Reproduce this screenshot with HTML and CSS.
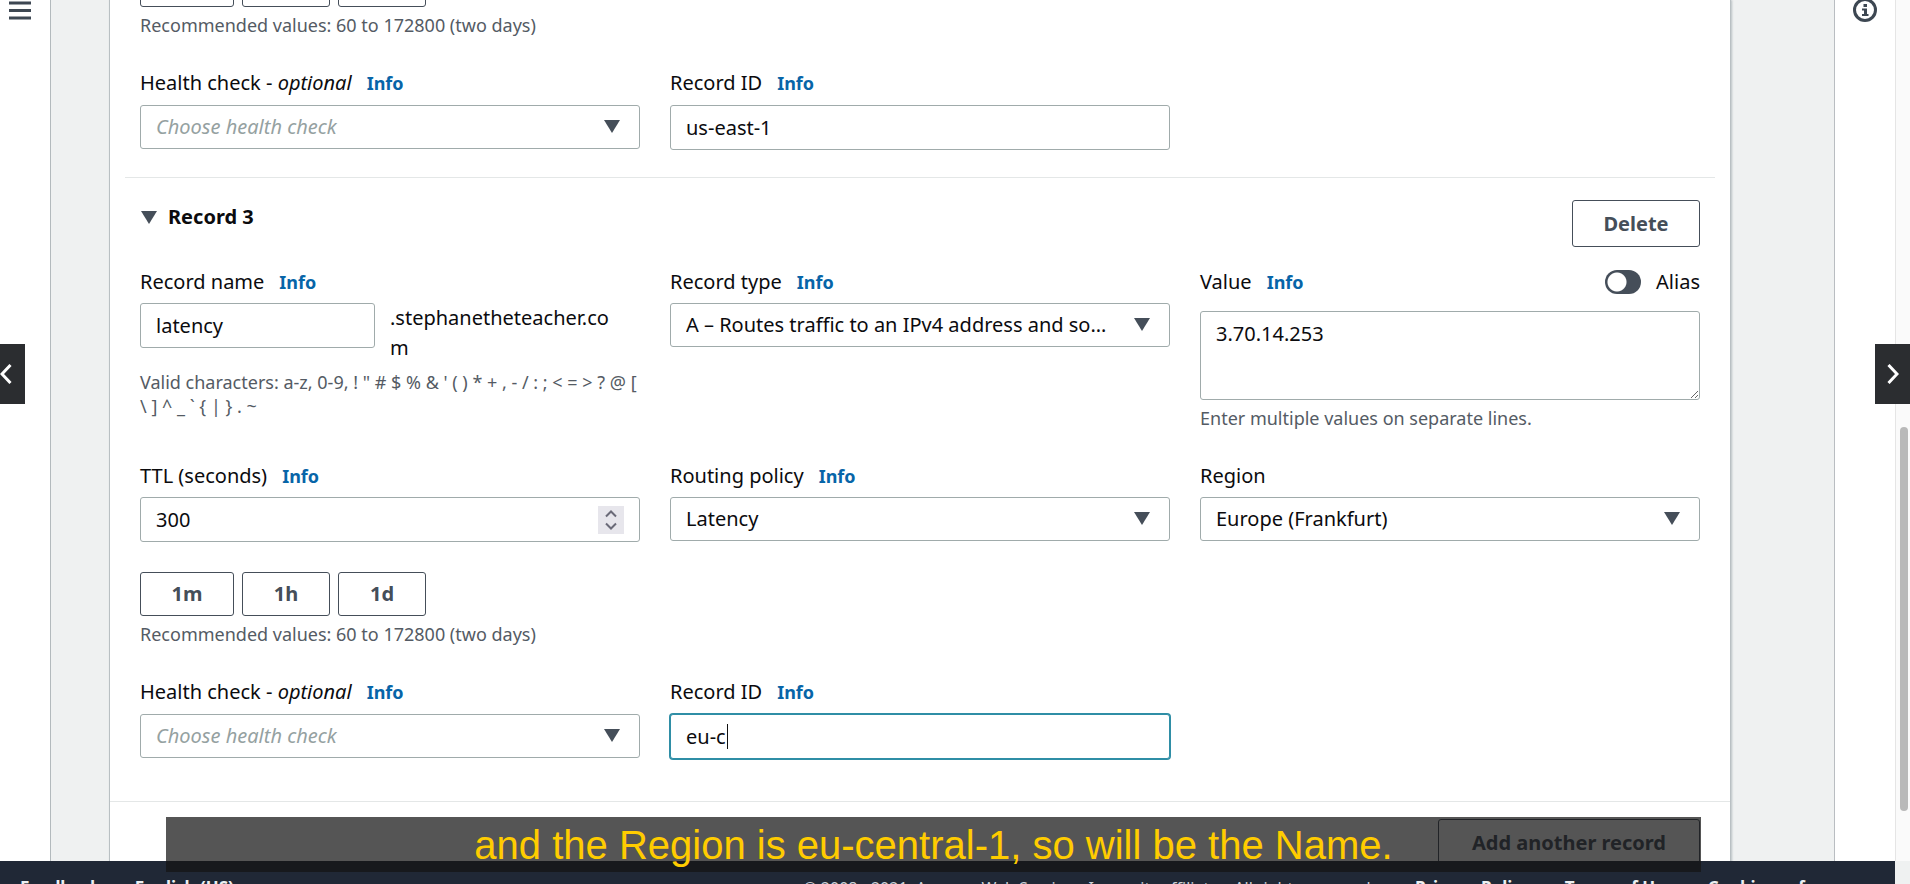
FILE: index.html
```
<!DOCTYPE html>
<html lang="en">
<head>
<meta charset="utf-8">
<title>Create record</title>
<link rel="stylesheet" href="styles.css">
</head>
<body>
<div class="app">
  <div class="workspace">
    <aside class="side side-left">
      <button class="icon-button" type="button" aria-label="Open navigation">
        <svg width="22" height="20" viewBox="0 0 22 20"><path d="M0 3h22M0 10.500h22M0 18h22" stroke="#3d4752" stroke-width="3"/></svg>
      </button>
    </aside>
    <main class="card">
      <section class="record record-previous">
        <div class="presets"><button class="button preset preset-minute" type="button" aria-label="1 minute"></button><button class="button preset" type="button" aria-label="1 hour"></button><button class="button preset" type="button" aria-label="1 day"></button></div>
        <p class="hint">Recommended values: 60 to 172800 (two days)</p>
        <div class="grid identity">
          <div class="field">
            <div class="label-row"><label for="health2">Health check - <em>optional</em></label><a class="info" href="#">Info</a></div>
            <div class="select-wrap"><select id="health2" class="control placeholder"><option>Choose health check</option></select><svg class="caret" viewBox="0 0 16 13"><path d="M0 0h16L8 13z"/></svg></div>
          </div>
          <div class="field">
            <div class="label-row"><label for="id2">Record ID</label><a class="info" href="#">Info</a></div>
            <input id="id2" class="control input" type="text" value="us-east-1">
          </div>
        </div>
      </section>
      <section class="record">
        <div class="record-head">
          <h2><button class="toggle" type="button"><svg class="caret-head" viewBox="0 0 16 13"><path d="M0 0h16L8 13z"/></svg>Record 3</button></h2>
          <button class="button delete" type="button">Delete</button>
        </div>
        <div class="grid row-one">
          <div class="field">
            <div class="label-row"><label for="name3">Record name</label><a class="info" href="#">Info</a></div>
            <div class="name-row"><input id="name3" class="control input" type="text" value="latency"><span class="domain">.stephanetheteacher.com</span></div>
            <p class="hint chars">Valid characters: a-z, 0-9, ! " # $ % &amp; ' ( ) * + , - / : ; &lt; = &gt; ? @ [ \ ] ^ _ ` { | } . ~</p>
          </div>
          <div class="field">
            <div class="label-row"><label for="type3">Record type</label><a class="info" href="#">Info</a></div>
            <div class="select-wrap"><select id="type3" class="control"><option>A – Routes traffic to an IPv4 address and some AWS resources</option></select><svg class="caret" viewBox="0 0 16 13"><path d="M0 0h16L8 13z"/></svg></div>
          </div>
          <div class="field">
            <div class="label-row value-label"><label for="value3">Value</label><a class="info" href="#">Info</a><label class="alias"><input class="switch" type="checkbox">Alias</label></div>
            <textarea id="value3" class="control area">3.70.14.253</textarea>
            <p class="hint">Enter multiple values on separate lines.</p>
          </div>
        </div>
        <div class="grid row-two">
          <div class="field">
            <div class="label-row"><label for="ttl3">TTL (seconds)</label><a class="info" href="#">Info</a></div>
            <div class="select-wrap"><input id="ttl3" class="control input" type="number" value="300"><svg class="stepper" viewBox="0 0 26 28"><path d="M0 0h26v28H0z" fill="#e7e6ec"/><path d="M8 10.500l5-5 5 5M8 17.500l5 5 5-5" fill="none" stroke="#6a6a78" stroke-width="2"/></svg></div>
            <div class="presets presets-spaced"><button class="button preset preset-minute" type="button">1m</button><button class="button preset" type="button">1h</button><button class="button preset" type="button">1d</button></div>
            <p class="hint">Recommended values: 60 to 172800 (two days)</p>
          </div>
          <div class="field">
            <div class="label-row"><label for="policy3">Routing policy</label><a class="info" href="#">Info</a></div>
            <div class="select-wrap"><select id="policy3" class="control"><option>Latency</option></select><svg class="caret" viewBox="0 0 16 13"><path d="M0 0h16L8 13z"/></svg></div>
          </div>
          <div class="field">
            <div class="label-row"><label for="region3">Region</label></div>
            <div class="select-wrap"><select id="region3" class="control"><option>Europe (Frankfurt)</option></select><svg class="caret" viewBox="0 0 16 13"><path d="M0 0h16L8 13z"/></svg></div>
          </div>
        </div>
        <div class="grid identity">
          <div class="field">
            <div class="label-row"><label for="health3">Health check - <em>optional</em></label><a class="info" href="#">Info</a></div>
            <div class="select-wrap"><select id="health3" class="control placeholder"><option>Choose health check</option></select><svg class="caret" viewBox="0 0 16 13"><path d="M0 0h16L8 13z"/></svg></div>
          </div>
          <div class="field">
            <div class="label-row"><label for="id3">Record ID</label><a class="info" href="#">Info</a></div>
            <div class="typing"><input id="id3" class="control input focused" type="text" value="eu-c"><span class="cursor-line"></span></div>
          </div>
        </div>
      </section>
      <div class="card-foot"><button class="button add" type="button">Add another record</button></div>
    </main>
    <aside class="side side-right">
      <button class="icon-button" type="button" aria-label="Open help">
        <svg width="24" height="24" viewBox="0 0 24 24"><circle cx="12" cy="12" r="10.500" fill="none" stroke="#3d4752" stroke-width="3"/><path d="M10.500 6h3.500v3h-3.500zM9 10.500h5v5.500h1.500v2h-6.500v-2h2v-3.500h-2z" fill="#3d4752"/></svg>
      </button>
    </aside>
    <div class="scrollbar"><div class="thumb"></div></div>
  </div>
  <footer class="footer">
    <a href="#">Feedback</a>
    <a href="#">English (US) <svg width="12" height="8" viewBox="0 0 12 8"><path d="M0 0h12L6 8z" fill="#000a2c"/></svg></a>
    <span class="copyright">© 2008 - 2021, Amazon Web Services, Inc. or its affiliates. All rights reserved.</span>
    <a href="#">Privacy Policy</a>
    <a href="#">Terms of Use</a>
    <a href="#">Cookie preferences</a>
  </footer>
  <div class="caption">and the Region is eu-central-1, so will be the Name.</div>
  <button class="nav nav-prev" type="button" aria-label="Previous"><svg width="12" height="20" viewBox="0 0 12 20"><path d="M10.500 1L2 10l8.500 9" fill="none" stroke="#fff" stroke-width="3"/></svg></button>
  <button class="nav nav-next" type="button" aria-label="Next"><svg width="12" height="20" viewBox="0 0 12 20"><path d="M1.500 1L10 10l-8.500 9" fill="none" stroke="#fff" stroke-width="3"/></svg></button>
</div>
</body>
</html>
```
FILE: styles.css
```
* { box-sizing: border-box; }
body { margin: 0; font-family: "Noto Sans", "Open Sans", sans-serif; font-size: 20px; line-height: 30px; color: #0b0b0e; }
button, input, select, textarea { font: inherit; color: inherit; margin: 0; }
p, h2 { margin: 0; }
h2 { font-size: 20px; }
.app { position: relative; height: 100vh; overflow: hidden; display: flex; flex-direction: column; background: #eff1f1; }
.workspace { flex: 1; min-height: 0; display: flex; overflow: hidden; }
.side { background: #fff; flex: none; display: flex; justify-content: center; align-items: flex-start; }
.side-left { width: 51px; border-right: 1px solid #b3babd; padding-right: 11px; }
.side-right { width: 61px; border-left: 1px solid #b9bdc1; }
.icon-button { border: 0; padding: 0; background: none; display: flex; }
.side-right .icon-button { margin-top: -2px; }
.card { flex: 1; min-width: 0; margin: 0 103px 0 58px; background: #fff; border: 1px solid #b9c0c3; border-width: 0 1px; align-self: flex-start; box-shadow: 1px 0 2px #b9c0c3; }
.record { margin: 0 15px; padding: 0 15px; }
.record-previous { border-bottom: 1px solid #e4e7e7; padding-bottom: 27px; margin-top: -37px; }
.grid { display: grid; grid-template-columns: repeat(3, minmax(0, 1fr)); column-gap: 30px; }
.field { min-width: 0; }
.presets { display: flex; gap: 8px; }
.presets-spaced { margin-top: 30px; }
.button { background: #fff; border: 1px solid #454e59; border-radius: 3px; color: #454e59; font-weight: 700; padding: 0 30px; height: 44px; }
.preset { width: 88px; padding: 0; }
.preset-minute { width: 94px; }
.hint { color: #545b64; font-size: 18px; line-height: 24px; margin-top: 6px; }
.label-row { display: flex; align-items: center; gap: 15px; height: 30px; margin-bottom: 6px; white-space: nowrap; }
.info { color: #0765a8; font-size: 18px; font-weight: 700; text-decoration: none; }
.identity { margin-top: 31px; }
.identity .label-row { margin-bottom: 7px; }
.control { display: block; width: 100%; height: 44px; padding: 0 15px; background: #fff; border: 1px solid #a0abab; border-radius: 3px; outline: 0; appearance: none; }
.input { height: 45px; }
.select-wrap, .typing { position: relative; }
select.control { padding-right: 50px; text-overflow: ellipsis; white-space: nowrap; overflow: hidden; }
.placeholder { color: #95a1a1; font-style: italic; }
.caret { position: absolute; right: 20px; top: 15px; width: 16px; height: 13px; fill: #454e59; }
.caret-head { width: 16px; height: 13px; fill: #454e59; }
.record-head { display: flex; justify-content: space-between; align-items: flex-start; padding-top: 22px; }
.toggle { border: 0; background: none; padding: 2px 0 0 1px; display: flex; align-items: center; gap: 11px; }
.delete { height: 47px; width: 128px; padding: 0; }
.row-one { margin-top: 20px; }
.name-row { display: flex; gap: 15px; align-items: flex-start; padding-right: 20px; }
.name-row .control { width: 235px; flex: none; }
.domain { min-width: 0; overflow-wrap: anywhere; }
.chars { margin-top: 7px; }
.alias { margin-left: auto; display: flex; align-items: center; gap: 15px; }
.switch { appearance: none; width: 36px; height: 24px; border-radius: 12px; background: radial-gradient(circle at 12px 12px, #fff 9px, #454e59 10px); }
.value-label { margin-bottom: 14px; }
.area { height: 89px; padding-top: 7px; resize: vertical; }
.row-two { margin-top: 31px; }
input[type=number]::-webkit-inner-spin-button { appearance: none; }
.stepper { position: absolute; right: 16px; top: 9px; width: 26px; height: 28px; }
.focused { border: 1px solid #2f8ea6; box-shadow: 0 0 0 1px #2f8ea6; }
.cursor-line { position: absolute; left: 57px; top: 10px; width: 1px; height: 25px; background: #111; }
.card-foot { margin-top: 42px; border-top: 1px solid #e4e7e7; padding: 17px 30px 24px; display: flex; justify-content: flex-end; }
.add { width: 262px; height: 47px; padding: 0; }
.scrollbar { width: 15px; flex: none; background: #fafafa; border-left: 1px solid #e5e5e5; padding: 427px 2px 0 4px; }
.thumb { width: 8px; height: 384px; border-radius: 4px; background: #b9b9b9; }
.footer { flex: none; margin-right: 15px; height: 23px; overflow: hidden; background: #202836; color: #ccd2d8; font-size: 17px; line-height: 20px; padding: 17px 24px 0 20px; display: flex; gap: 34px; white-space: nowrap; }
.footer a { color: #eceff1; text-decoration: none; font-weight: 700; }
.copyright { margin-left: auto; margin-right: 6px; font-size: 16px; }
.caption { position: absolute; left: 166px; right: 209px; bottom: 12px; height: 55px; background: rgba(20, 20, 20, .72); color: #fc0; font: 40px/56px "Liberation Sans", Arial, sans-serif; text-align: center; }
.nav { position: absolute; top: 344px; width: 25px; height: 60px; border: 0; background: #2b2d30; padding: 0; display: flex; align-items: center; }
.nav-prev { left: 0; }
.nav-next { right: 0; width: 35px; justify-content: center; }
```
